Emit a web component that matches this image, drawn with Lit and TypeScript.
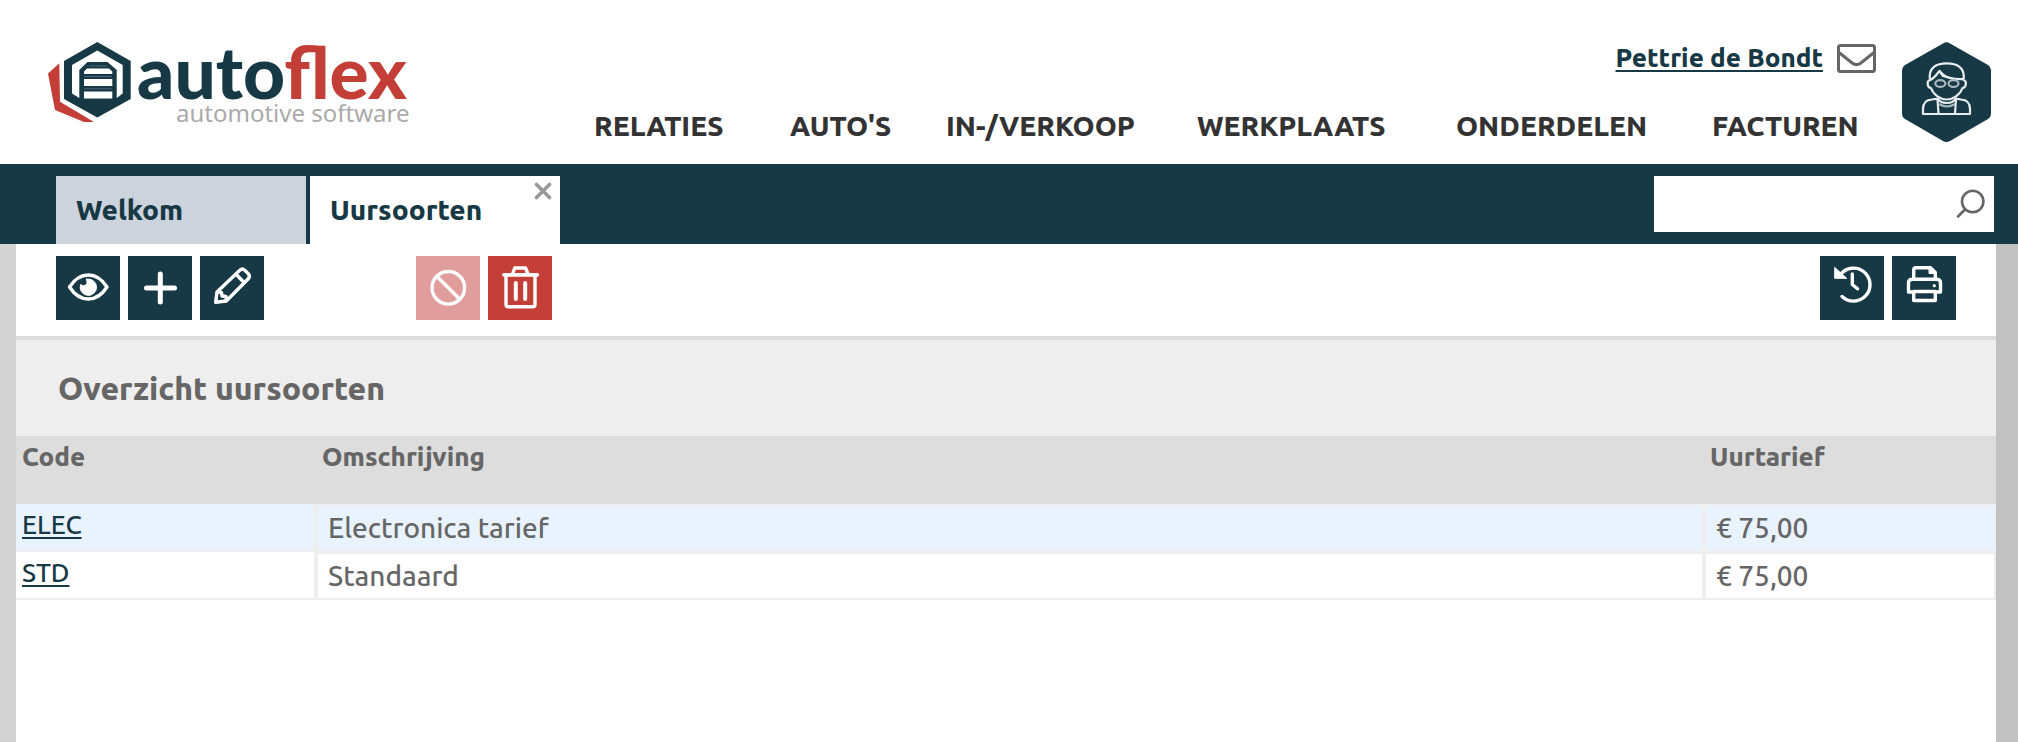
import { LitElement, html, css, svg } from "lit";
import { customElement, state } from "lit/decorators.js";
import { classMap } from "lit/directives/class-map.js";

const icons = {
  view: svg`<path d="M13.500 31C19 22.500 25.500 19 32.300 19S45.500 22.500 51 31C45.500 39.500 39 43 32.300 43S19 39.500 13.500 31Z"/><path class="solid" d="M30.500 23.200A8.200 8.200 0 1 1 24.600 28.500C27 30.500 31 29.500 31 26.500C31 25 30 24.300 30.500 23.200Z"/>`,
  add: svg`<path stroke-width="5" d="M32.300 18V46M18.500 32H46.500"/>`,
  edit: svg`<path d="M15.700 46.300L17 36L39.800 14.200Q42.300 11.800 44.800 14.200L48.200 17.600Q50.600 20.200 48.300 22.800L26.300 45L15.700 46.300ZM36 18.200L44.300 26.800M17 36L21.500 36.500L22 40L26 40.500L26.300 45"/>`,
  block: svg`<circle cx="32.300" cy="31.800" r="16.300"/><path d="M21 20.500L43.800 43.300"/>`,
  remove: svg`<path stroke-width="3.800" d="M16 18.800H49.200"/><path d="M24.500 18L26.800 12H37.600L40 18M18 20V48.500Q18 50.700 20.200 50.700H44.800Q47 50.700 47 48.500V20"/><path stroke-width="4" d="M27.800 27V43M37.200 27V43"/>`,
  history: svg`<path d="M20.500 18.500A16.500 16.500 0 1 1 22 40.500M32.300 18V28.500L37.500 32.800"/><path class="solid" d="M15 11.700L26.700 22.300H15Z"/>`,
  print: svg`<path d="M21.700 22V14Q21.700 11.700 24 11.700H38.500L43.300 16.500V22M21.500 36H16.500V27Q16.500 23.200 20.300 23.200H44.500Q48.500 23.200 48.500 27V36H43.500M21.700 35.500H43.300V44.500H21.700Z"/><path class="solid" d="M37 11.500V17.500H44Z"/><circle class="solid" cx="42.300" cy="29.700" r="1.200"/>`,
};
type IconName = keyof typeof icons;
interface Tool { icon: IconName; label: string; danger?: boolean; disabled?: boolean }

const leftTools: Tool[] = [
  { icon: "view", label: "Bekijken" },
  { icon: "add", label: "Toevoegen" },
  { icon: "edit", label: "Wijzigen" },
];
const dangerTools: Tool[] = [
  { icon: "block", label: "Blokkeren", danger: true, disabled: true },
  { icon: "remove", label: "Verwijderen", danger: true },
];
const rightTools: Tool[] = [
  { icon: "history", label: "Historie" },
  { icon: "print", label: "Afdrukken" },
];
const menu = ["Relaties", "Auto's", "In-/Verkoop", "Werkplaats", "Onderdelen", "Facturen"];
const rows = [
  { code: "ELEC", description: "Electronica tarief", rate: "€ 75,00" },
  { code: "STD", description: "Standaard", rate: "€ 75,00" },
];

@customElement("app-root")
export class AppRoot extends LitElement {
  @state() private selected = "ELEC";

  static styles = css`
    :host {
      --navy: #173845;
      --red: #c23e37;
      --grey: #666;
      display: flex;
      flex-direction: column;
      min-height: 100vh;
      font-family: Ubuntu, "Noto Sans", sans-serif;
      font-size: 26px;
      font-weight: 500;
      line-height: 36px;
      color: var(--grey);
      background: linear-gradient(90deg, #d3d3d3, #c1c1c1);
    }
    * { box-sizing: border-box; }
    button { border: 0; padding: 0; font: inherit; cursor: pointer; }
    svg { display: block; }
    a { color: var(--navy); text-decoration-thickness: 2px; text-underline-offset: 3px; text-decoration-skip-ink: none; }

    .header { display: flex; align-items: flex-start; height: 164px; padding: 0 27px 0 48px; background: #fff; }
    .logo { flex: none; margin-top: 22px; }
    .logo-name { font: 900 73px Lato, sans-serif; }
    .logo-sub { font: 400 24px "Noto Sans", sans-serif; }
    .main { flex: 1; margin: 40px 26px 0 170px; }
    .user { display: flex; justify-content: flex-end; align-items: center; gap: 14px; font-weight: 800; }
    .mail { background: none; }
    .menu { display: grid; grid-template-columns: 196fr 156fr 251fr 259fr 256fr 164fr; margin-top: 30px; }
    .menu a { color: #333; font-size: 28px; font-weight: 800; line-height: 40px; text-decoration: none; text-transform: uppercase; white-space: nowrap; }
    .avatar { flex: none; margin-top: 42px; }

    .bar { display: flex; gap: 4px; height: 80px; padding: 12px 24px 0 56px; background: var(--navy); }
    .tab { position: relative; width: 250px; background: #ccd3dd; }
    .tab.active { background: #fff; }
    .tab-label { width: 100%; padding: 0 20px; background: none; color: var(--navy); font-size: 28px; font-weight: 800; line-height: 68px; text-align: left; }
    .close { position: absolute; top: 6px; right: 8px; background: none; }
    .search { display: flex; align-items: center; width: 340px; height: 56px; margin-left: auto; padding-right: 8px; background: #fff; }
    .search input { flex: 1; min-width: 0; height: 100%; border: 0; padding: 0 12px; background: none; font: inherit; color: inherit; outline: none; }
    .search button { background: none; }

    .page { flex: 1; margin: 0 22px 0 16px; background: #fff; }
    .toolbar { display: flex; padding: 12px 40px 16px; border-bottom: 4px solid #ddd; }
    .group { display: flex; gap: 8px; }
    .group.danger { margin-left: 152px; }
    .group.end { margin-left: auto; }
    .tool { width: 64px; height: 64px; background: var(--navy); }
    .tool.danger { background: var(--red); }
    .tool:disabled { background: #e09d9b; cursor: default; }
    .tool svg { fill: none; stroke: #fff; stroke-width: 3.4; stroke-linecap: round; stroke-linejoin: round; }
    .tool .solid { fill: #fff; stroke-width: 1; }
    .title { margin: 0; padding: 0 42px; background: #eee; font-size: 32px; font-weight: 800; line-height: 96px; }

    table { width: 100%; border-spacing: 0; table-layout: fixed; }
    .col-code { width: 300px; }
    .col-rate { width: 292px; }
    th { height: 68px; padding: 4px 6px; background: #ddd; font-size: 26px; font-weight: 800; line-height: 34px; text-align: left; vertical-align: top; }
    td { height: 48px; padding: 2px 10px 0; border: 2px solid #eee; font-size: 28px; line-height: 40px; vertical-align: top; }
    td:first-child { padding: 3px 6px 0; border-width: 0 2px 2px 0; font-size: 26px; line-height: 36px; }
    .selected td { background: #e8f3fd; }
  `;

  private tool(t: Tool) {
    return html`<button class=${classMap({ tool: true, danger: !!t.danger })} ?disabled=${t.disabled} aria-label=${t.label}>
      <svg width="64" height="64" viewBox="0 0 64 64">${icons[t.icon]}</svg>
    </button>`;
  }

  private logo() {
    return html`<svg class="logo" width="376" height="112" viewBox="0 -20 376 112" role="img" aria-label="autoflex automotive software">
      <path fill="#c23e37" d="M11.300 21.300L0 31.500L7 68L36 80H46L12 59.700Z"/>
      <path fill="#173845" fill-rule="evenodd" d="M49.300 0L82.700 19V57L49.300 75.500L16 57V19ZM49.300 8.500L24 23V51.500L31.300 56V28L39.500 20H59.500L68.700 28V56L74.700 51.500V23Z"/>
      <path fill="#fff" d="M36 32V29.500L39 26.500H61L64.300 29.500V32ZM36 37H64.300V44H36ZM36 49.500H64.300V56.500H36Z"/>
      <path stroke="#8398a0" d="M41 24H59M36 34.500H64M36 46.800H64" stroke-opacity="0.5"/>
      <text class="logo-name" x="89" y="57" fill="#173845">auto<tspan fill="#c23e37">flex</tspan></text>
      <text class="logo-sub" x="128" y="80" fill="#aaa">automotive software</text>
    </svg>`;
  }

  private avatar() {
    return html`<svg class="avatar" width="89" height="100" viewBox="0 0 89 100" role="img" aria-label="Profiel">
      <path fill="#173845" d="M41 1.500Q44.500 -1 48 1.500L86 23Q89 25 89 28V72Q89 75 86 77L48 99Q44.500 101 41 99L3 77Q0 75 0 72V28Q0 25 3 23Z"/>
      <g fill="none" stroke="#e8eef0" stroke-width="2.200" stroke-linejoin="round">
        <path d="M28 38C26 25 35 21.300 44.700 21.300S63.500 25 61.500 38C65.500 39 64 46 60.500 46C58 53 51 57.500 44.700 57.500S31.500 53 29 46C25.500 46 24 39 28 38C32 37 34 33 37.500 29C43 36 50 37.500 61 37"/>
        <path d="M37.500 29L41 34L54 37.500"/>
        <path d="M21 72V67Q21 58 30 57.500L36 56.500Q38 61 44.700 61T53.500 56.500L59 57.500Q68 58 68 67V72ZM35.500 57.500L36.500 71.500M54 57.500L53 71.500"/>
        <g stroke="#a9b8be"><ellipse cx="38.300" cy="41.500" rx="5" ry="3.400"/><ellipse cx="51.500" cy="41.500" rx="5" ry="3.400"/><path d="M37 62Q45 67 53 62"/></g>
      </g>
    </svg>`;
  }

  render() {
    return html`
      <header class="header">
        ${this.logo()}
        <div class="main">
          <div class="user">
            <a href="#profiel">Pettrie de Bondt</a>
            <button class="mail" aria-label="Berichten">
              <svg width="39" height="32" viewBox="0 0 39 32" fill="none" stroke="#666" stroke-width="3" stroke-linejoin="round"><rect x="1.500" y="3.500" width="36" height="26" rx="2"/><path d="M2 10.500L15.500 21.200Q19.500 24 23.500 21.200L37 10.500"/></svg>
            </button>
          </div>
          <nav class="menu">${menu.map((m) => html`<a href="#${m.toLowerCase()}">${m}</a>`)}</nav>
        </div>
        ${this.avatar()}
      </header>
      <div class="bar">
        <div class="tab"><button class="tab-label">Welkom</button></div>
        <div class="tab active">
          <button class="tab-label">Uursoorten</button>
          <button class="close" aria-label="Sluiten">
            <svg width="18" height="18" viewBox="0 0 18 18" stroke="#999" stroke-width="3.600" stroke-linecap="round"><path d="M2.500 2.500L15.500 15.500M15.500 2.500L2.500 15.500"/></svg>
          </button>
        </div>
        <form class="search" role="search" @submit=${(e: Event) => e.preventDefault()}>
          <input type="text" aria-label="Zoeken" />
          <button aria-label="Zoek">
            <svg width="32" height="32" viewBox="0 0 32 32" fill="none" stroke="#666" stroke-width="2.600" stroke-linecap="round"><circle cx="18.700" cy="13.500" r="10.700"/><path d="M11 21.500L4 28.500"/></svg>
          </button>
        </form>
      </div>
      <main class="page">
        <div class="toolbar">
          <div class="group">${leftTools.map((t) => this.tool(t))}</div>
          <div class="group danger">${dangerTools.map((t) => this.tool(t))}</div>
          <div class="group end">${rightTools.map((t) => this.tool(t))}</div>
        </div>
        <h1 class="title">Overzicht uursoorten</h1>
        <table>
          <colgroup><col class="col-code" /><col /><col class="col-rate" /></colgroup>
          <thead><tr><th scope="col">Code</th><th scope="col">Omschrijving</th><th scope="col">Uurtarief</th></tr></thead>
          <tbody>
            ${rows.map((r) => html`<tr class=${classMap({ selected: r.code === this.selected })} @click=${() => (this.selected = r.code)}>
              <td><a href="#${r.code}">${r.code}</a></td><td>${r.description}</td><td>${r.rate}</td>
            </tr>`)}
          </tbody>
        </table>
      </main>
    `;
  }
}
